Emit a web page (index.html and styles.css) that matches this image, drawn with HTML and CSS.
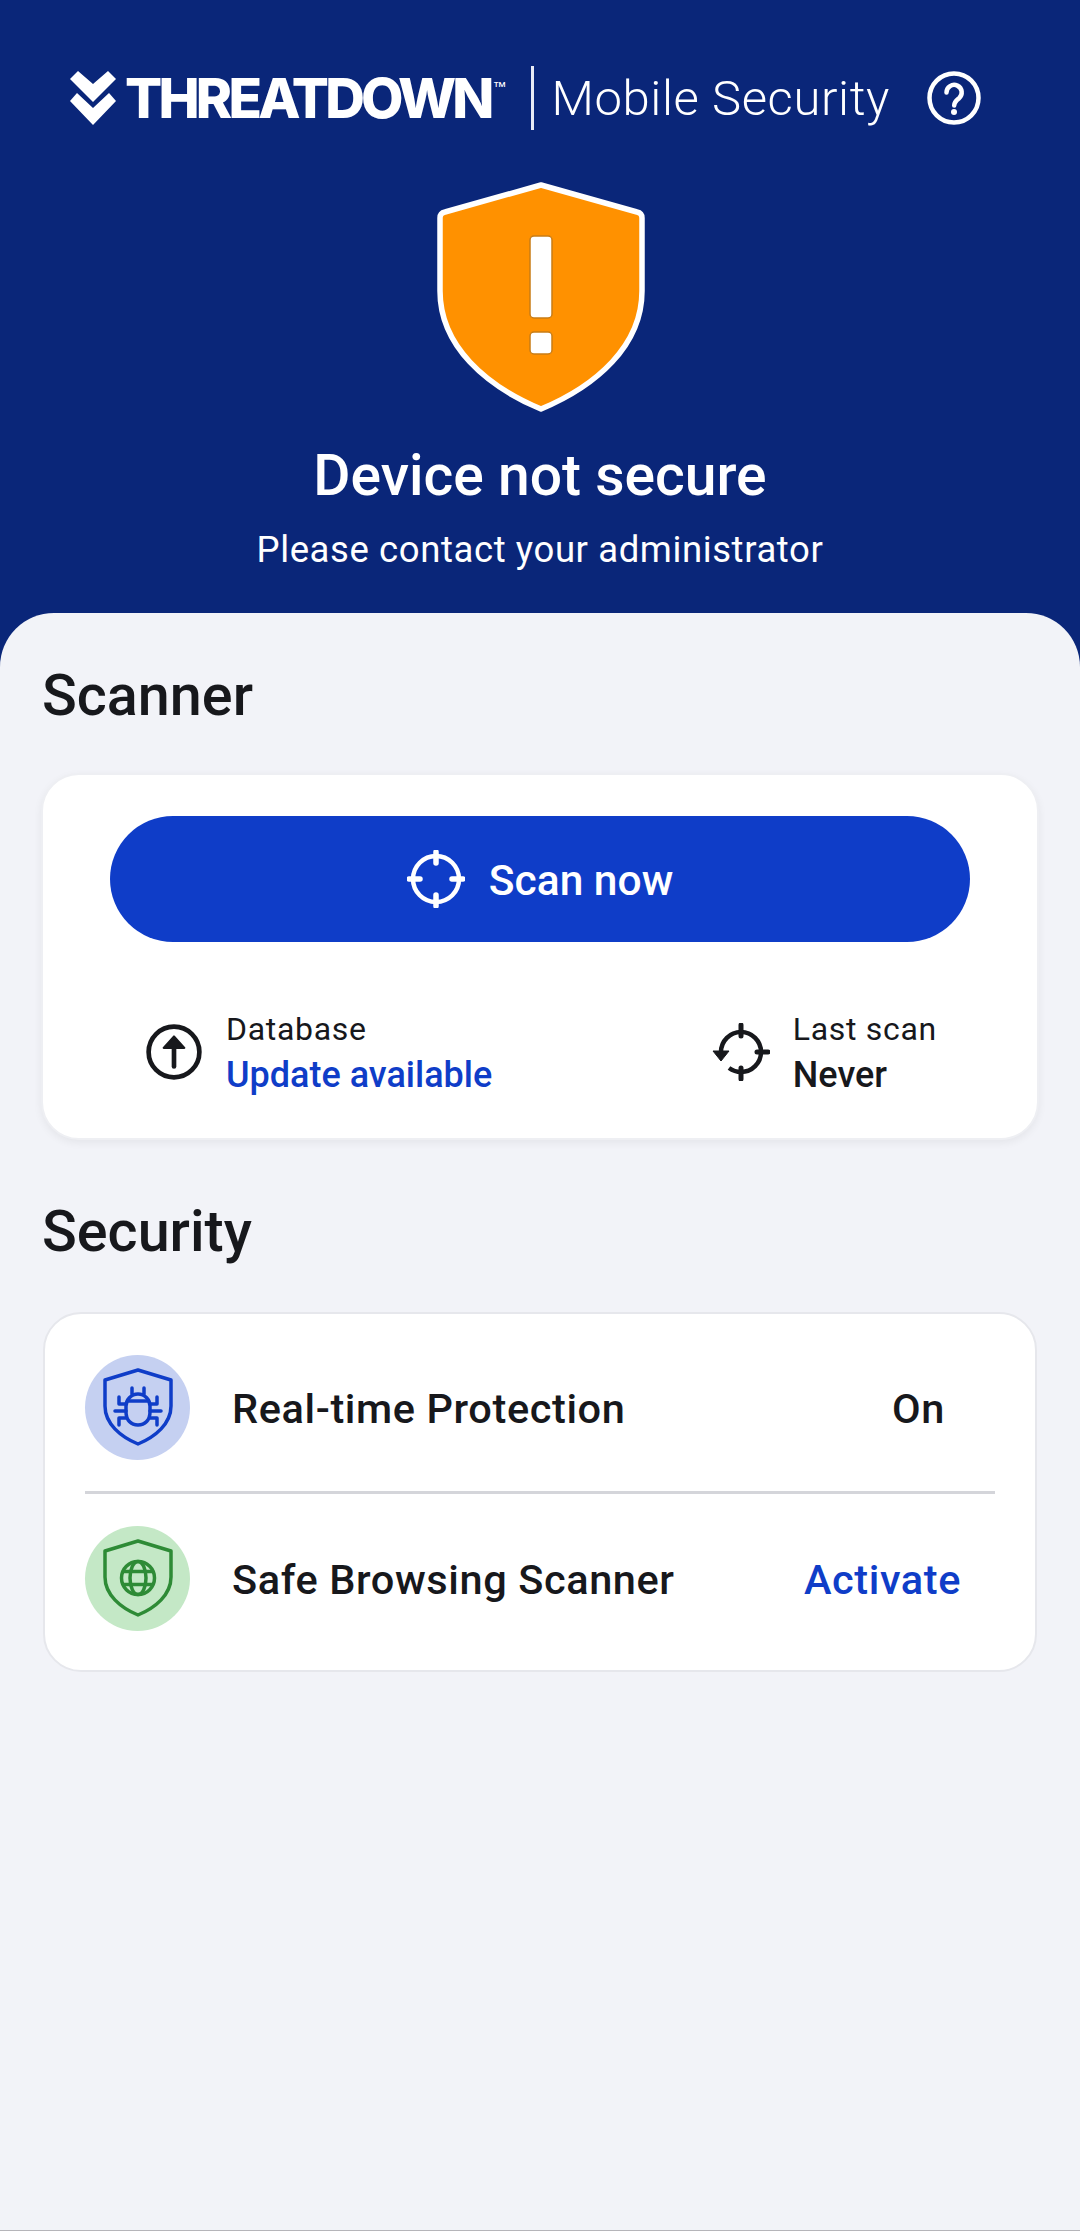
FILE: index.html
```html
<!DOCTYPE html>
<html lang="en">
<head>
    <meta charset="UTF-8">
    <meta name="viewport" content="width=device-width, initial-scale=1.0">
    <title>ThreatDown Mobile Security</title>
    <link rel="stylesheet" href="styles.css">
</head>
<body>
    <div class="app">
        <!-- Status header -->
        <header class="header">
            <div class="topbar">
                <svg class="logo-mark" viewBox="0 0 46 54">
                    <path d="M8 0 23 13 38 0 46 8 23 31 0 8Z" fill="#fff"/>
                    <path d="M7 22 23 37 39 22 46 30 23 54 0 30Z" fill="#fff"/>
                </svg>
                <span class="logo-text">THREATDOWN</span>
                <span class="logo-tm">TM</span>
                <span class="logo-divider"></span>
                <span class="product-name">Mobile Security</span>
                <svg class="help-icon" viewBox="0 0 54 54">
                    <circle cx="27" cy="27" r="24.500" fill="none" stroke="#fff" stroke-width="4.500"/>
                    <path d="M19.500 21.500a7.600 7.600 0 1 1 12.400 5.900c-2.900 2.300-4.700 3.600-4.700 7.100" fill="none" stroke="#fff" stroke-width="4.500" stroke-linecap="round"/>
                    <circle cx="27" cy="41" r="3" fill="#fff"/>
                </svg>
            </div>
            <svg class="shield" viewBox="0 0 210 232">
                <path d="M105 4 201 31Q206 32 206 37V110C206 165 160 205 105 228 50 205 4 165 4 110V37Q4 32 9 31Z" fill="#ff9100" stroke="#fff" stroke-width="5.500" stroke-linejoin="round"/>
                <rect x="94" y="55" width="22" height="82" rx="4" fill="#fff" stroke="#c97c14" stroke-width="1.500"/>
                <rect x="94" y="151" width="22" height="22" rx="4" fill="#fff" stroke="#c97c14" stroke-width="1.500"/>
            </svg>
            <h1 class="status-title">Device not secure</h1>
            <p class="status-sub">Please contact your administrator</p>
        </header>

        <!-- Main sheet -->
        <main class="sheet">
            <h2 class="section-title">Scanner</h2>
            <section class="card scanner-card">
                <button class="scan-button">
                    <svg class="scan-icon" viewBox="0 0 58 58">
                        <circle cx="29" cy="29" r="23" fill="none" stroke="#fff" stroke-width="4.500"/>
                        <path d="M29 2V13M29 45V56M2 29H13M45 29H56" stroke="#fff" stroke-width="5.500" stroke-linecap="round"/>
                    </svg>
                    <span class="scan-label">Scan now</span>
                </button>
                <div class="scan-info">
                    <div class="info-item">
                        <svg class="info-icon" viewBox="0 0 56 56">
                            <circle cx="28" cy="28" r="24.500" fill="none" stroke="#17181c" stroke-width="4.500"/>
                            <path d="M28 42V20" stroke="#17181c" stroke-width="4.500" stroke-linecap="round"/>
                            <path d="M18 24 28 13 38 24Z" fill="#17181c" stroke="#17181c" stroke-width="2" stroke-linejoin="round"/>
                        </svg>
                        <div class="info-text">
                            <div class="info-label">Database</div>
                            <div class="info-value link">Update available</div>
                        </div>
                    </div>
                    <div class="info-item">
                        <svg class="info-icon" viewBox="0 0 58 58">
                            <path d="M9 29A20 20 0 1 1 29 49C24 49 20.500 47.500 17 45" fill="none" stroke="#17181c" stroke-width="4.500"/>
                            <path d="M29 2V13M29 45V56M45 29H56" stroke="#17181c" stroke-width="5" stroke-linecap="round"/>
                            <path d="M1 28H17L9 38Z" fill="#17181c" stroke="#17181c" stroke-width="1" stroke-linejoin="round"/>
                        </svg>
                        <div class="info-text">
                            <div class="info-label">Last scan</div>
                            <div class="info-value">Never</div>
                        </div>
                    </div>
                </div>
            </section>

            <h2 class="section-title security-title">Security</h2>
            <section class="card security-card">
                <div class="row">
                    <div class="row-icon icon-blue">
                        <svg viewBox="0 0 70 78">
                            <path d="M35 2 68 12V38C68 56 52 69 35 76 18 69 2 56 2 38V12Z" fill="none" stroke="#0f3dc8" stroke-width="3.500" stroke-linejoin="round"/>
                            <path d="M35 26c7 0 12 6 12 12v6c0 8-5 13-12 13s-12-5-12-13v-6c0-6 5-12 12-12Z" fill="none" stroke="#0f3dc8" stroke-width="3.500"/>
                            <path d="M25 33H45M29 26V20M41 26V20M23 36H16V29M23 43H12M23 50H16V57M47 36H54V29M47 43H58M47 50H54V57" fill="none" stroke="#0f3dc8" stroke-width="3.500" stroke-linecap="round" stroke-linejoin="round"/>
                        </svg>
                    </div>
                    <span class="row-name">Real-time Protection</span>
                    <span class="row-status status-on">On</span>
                </div>
                <div class="row-divider"></div>
                <div class="row">
                    <div class="row-icon icon-green">
                        <svg viewBox="0 0 70 78">
                            <path d="M35 2 68 12V38C68 56 52 69 35 76 18 69 2 56 2 38V12Z" fill="none" stroke="#2e8b36" stroke-width="3.500" stroke-linejoin="round"/>
                            <g fill="none" stroke="#2e8b36" stroke-width="3.500">
                                <circle cx="35" cy="39" r="16.500"/>
                                <ellipse cx="35" cy="39" rx="8" ry="16.500"/>
                                <path d="M20 32.500H50M20 45.500H50"/>
                            </g>
                        </svg>
                    </div>
                    <span class="row-name">Safe Browsing Scanner</span>
                    <span class="row-status link">Activate</span>
                </div>
            </section>
        </main>
    </div>
</body>
</html>
```

FILE: styles.css
```css
/* General Styling */
html, body {
    margin: 0;
    padding: 0;
    height: 100%;
}

body {
    font-family: Roboto, "Noto Sans", sans-serif;
    color: #17181c;
    background: #0a2679;
}

.app {
    display: flex;
    flex-direction: column;
    height: 2231px;
}

/* Header */
.header {
    display: flex;
    flex-direction: column;
    align-items: center;
    flex: none;
    height: 613px;
    box-sizing: border-box;
    padding-top: 66px;
    color: #fff;
}

.topbar {
    display: flex;
    align-items: center;
    align-self: flex-start;
    height: 64px;
    margin-left: 70px;
}

.logo-mark {
    width: 46px;
    height: 54px;
    margin-right: 9px;
}

.logo-text {
    font-family: Inter, sans-serif;
    font-size: 55px;
    font-weight: 800;
    letter-spacing: -3.800px;
    line-height: 1;
}

.logo-tm {
    align-self: flex-start;
    margin: 14px 0 0 3px;
    font-size: 8px;
    font-weight: 500;
}

.logo-divider {
    width: 3px;
    height: 64px;
    margin: 0 18px 0 25px;
    background: #e8ebf6;
}

.product-name {
    font-size: 49px;
    font-weight: 300;
    letter-spacing: 0.600px;
    white-space: nowrap;
}

.help-icon {
    width: 54px;
    height: 54px;
    margin-left: 37px;
}

.shield {
    width: 210px;
    height: 232px;
    margin: 51px 0 0 2px;
}

.status-title {
    margin: 31px 0 0;
    font-size: 57px;
    font-weight: 500;
    line-height: 64px;
}

.status-sub {
    margin: 21px 0 0;
    font-size: 36.500px;
    font-weight: 400;
    letter-spacing: 0.600px;
    line-height: 42px;
}

/* Sheet */
.sheet {
    flex: 1;
    padding: 51px 42px 0;
    background: #f2f3f8;
    border-bottom: 1px solid #b5b5b9;
    border-radius: 54px 54px 0 0;
}

.section-title {
    margin: 0;
    font-size: 57.500px;
    font-weight: 500;
    line-height: 64px;
}

.security-title {
    margin-top: 60px;
}

.card {
    box-sizing: border-box;
    background: #fff;
    border: 2px solid #e6e7ec;
    border-radius: 38px;
}

/* Scanner Card */
.scanner-card {
    height: 367px;
    margin: 45px -1px 0;
    padding: 41px 67px 0;
    border-color: #eeeff3;
    box-shadow: 0 3px 8px rgba(0, 0, 0, 0.06);
}

.scan-button {
    display: flex;
    justify-content: center;
    align-items: center;
    gap: 24px;
    width: 100%;
    height: 126px;
    border: none;
    border-radius: 63px;
    background: #0f3dc8;
    color: #fff;
    font-family: inherit;
    font-size: 42.500px;
    font-weight: 500;
}

.scan-icon {
    width: 58px;
    height: 58px;
}

.scan-label {
    padding-top: 2px;
}

.scan-info {
    display: flex;
    justify-content: space-between;
    margin-top: 67px;
    padding: 0 33px 0 35px;
}

.info-item {
    display: flex;
    align-items: center;
    gap: 23px;
}

.info-icon {
    width: 58px;
    height: 58px;
}

.info-label {
    font-size: 32px;
    letter-spacing: 0.700px;
    line-height: 40px;
}

.info-value {
    margin-top: 6px;
    font-size: 36px;
    font-weight: 500;
    line-height: 40px;
}

.link {
    color: #0f3dc8;
}

/* Security Card */
.security-card {
    height: 360px;
    margin: 48px 1px 0;
    padding: 9px 40px 0;
}

.row {
    display: flex;
    align-items: center;
    height: 168px;
}

.row-icon {
    display: flex;
    justify-content: center;
    align-items: center;
    flex: none;
    width: 105px;
    height: 105px;
    border-radius: 50%;
}

.row-icon svg {
    width: 70px;
    height: 78px;
}

.icon-blue {
    background: #c5d0f1;
}

.icon-green {
    background: #c4e8c6;
}

.row-name {
    flex: 1;
    margin-left: 42px;
    padding-top: 2px;
    font-size: 41.500px;
    font-weight: 500;
    letter-spacing: 0.600px;
}

.row-status {
    padding-top: 2px;
    font-size: 41.500px;
    font-weight: 500;
    letter-spacing: 0.600px;
    margin-right: 34px;
}

.status-on {
    margin-right: 50px;
}

.row-divider {
    height: 3px;
    background: #d4d5da;
}
```
